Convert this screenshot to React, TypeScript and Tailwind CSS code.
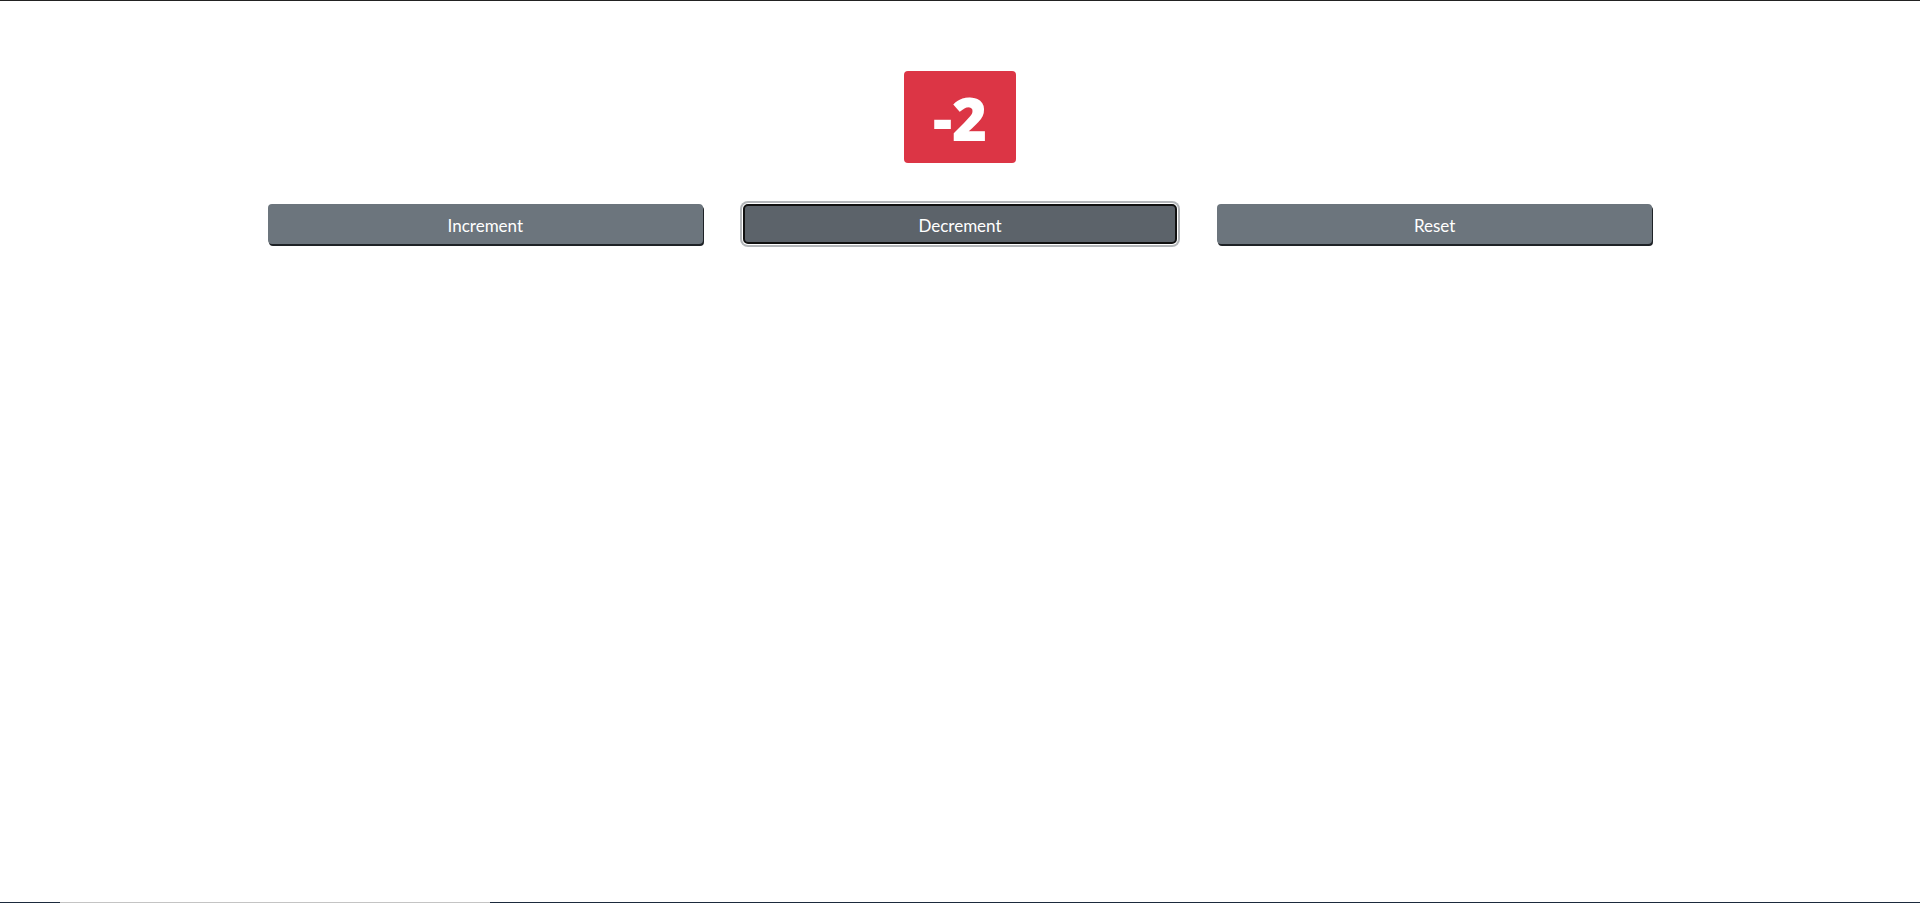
import { useState } from 'react';

export default function App() {
  const [count, setCount] = useState(-2);

  const btn =
    'h-10 pt-[3px] rounded-[4px] bg-[#6c757d] text-white text-[17px] shadow-[1px_2px_0_0_#1e2226] flex items-center justify-center';

  return (
    <div
      className="h-[903px] w-full flex flex-col bg-white border-t border-[#222]"
      style={{ fontFamily: 'Lato, "Open Sans", sans-serif' }}
    >
      <div className="flex-1 flex flex-col items-center pt-[70px]">
        {/* Counter */}
        <div
          className="w-[112px] h-[92px] pt-[2px] rounded-[4px] bg-[#dc3545] flex items-center justify-center text-white font-extrabold text-[60px] leading-none"
          style={{ fontFamily: '"Open Sans", Lato, sans-serif' }}
        >
          {count}
        </div>

        {/* Buttons */}
        <div className="w-[1384px] grid grid-cols-3 gap-10 mt-[41px]">
          <button className={btn} onClick={() => setCount((c) => c + 1)}>
            Increment
          </button>
          <button
            className="h-10 pt-[3px] rounded-[5px] bg-[#5c636a] text-white text-[17px] border-2 border-[#111] shadow-[0_0_0_1px_#fff,0_0_0_3px_#b3b6b9] flex items-center justify-center"
            onClick={() => setCount((c) => c - 1)}
          >
            Decrement
          </button>
          <button className={btn} onClick={() => setCount(0)}>
            Reset
          </button>
        </div>
      </div>

      {/* bottom edge */}
      <div className="h-px flex">
        <div className="w-[60px] bg-[#1b2a3d]" />
        <div className="w-[430px] bg-[#c4c4c4]" />
        <div className="flex-1 bg-[#1b2a3d]" />
      </div>
    </div>
  );
}
